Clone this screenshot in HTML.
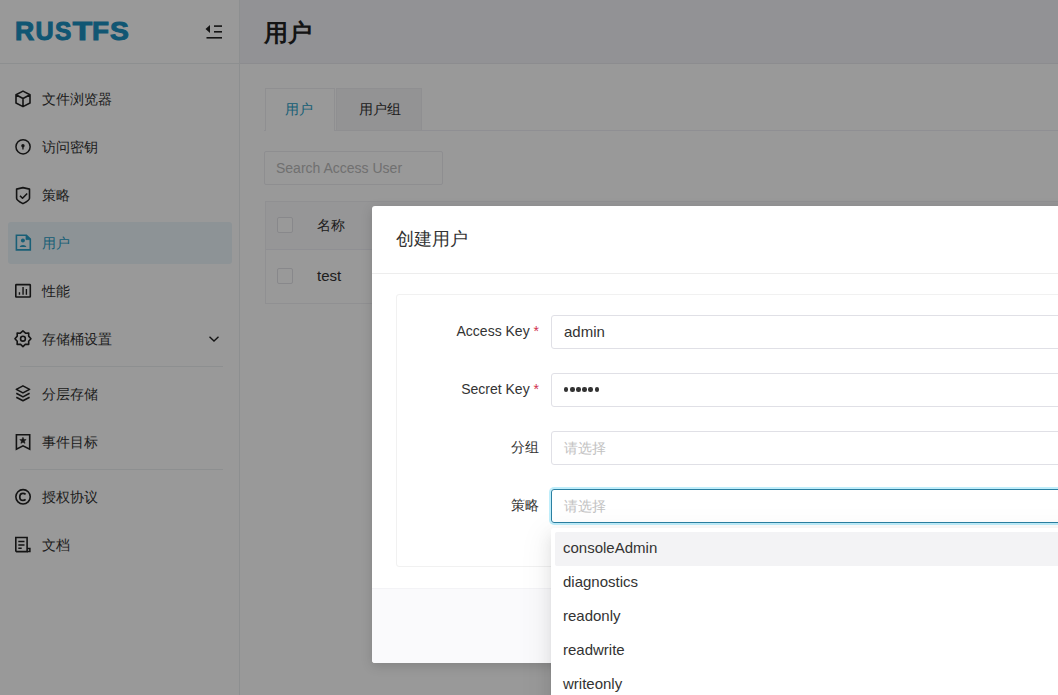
<!DOCTYPE html>
<html><head><meta charset="utf-8">
<style>
*{box-sizing:border-box;margin:0;padding:0}
html,body{width:1058px;height:695px;overflow:hidden;background:#fff;font-family:"Liberation Sans",sans-serif;color:#333;}
.abs{position:absolute}
#side{position:absolute;left:0;top:0;width:240px;height:695px;background:#fff;border-right:1px solid #eceef1}
#side .hd{position:absolute;left:0;top:0;width:239px;height:64px;border-bottom:1px solid #eceef1}
.logo{position:absolute;left:16px;top:18px;font-weight:bold;font-size:25px;line-height:28px;color:#2a9ec6;transform:scaleX(1.14);transform-origin:0 0}
.mi{position:absolute;left:8px;width:224px;height:42px;font-size:14px;color:#333}
.mi.act{background:#ecf6fb;color:#2a9ec6;border-radius:3px}
.mi svg{position:absolute;left:7px;top:12px;overflow:visible}
.mi span{position:absolute;left:34px;top:12px;line-height:18px}
.div{position:absolute;left:20px;width:203px;height:1px;background:#eceef1}
#top{position:absolute;left:240px;top:0;width:818px;height:64px;background:#f3f3f8;border-bottom:1px solid #e9eaee}
#top .t{position:absolute;left:24px;top:19px;font-size:24px;font-weight:bold;color:#222;line-height:28px}
.tab{position:absolute;top:88px;height:43px;font-size:14px;line-height:18px}
.tab span{position:absolute;top:11px}
.search{position:absolute;left:264px;top:151px;width:179px;height:34px;border:1px solid #ededf1;border-radius:2px;font-size:14px;color:#bbb;padding-left:11px;line-height:32px}
.tbl{position:absolute;left:265px;top:201px;width:800px;height:103px;border:1px solid #f0f0f3}
#mask{position:absolute;left:0;top:0;width:1058px;height:695px;background:rgba(0,0,0,0.4)}
#modal{position:absolute;left:372px;top:206px;width:720px;height:457px;background:#fff;border-radius:3px;box-shadow:0 3px 12px rgba(0,0,0,0.15)}
#modal .mt{position:absolute;left:24px;top:22px;font-size:18px;line-height:22px;color:#333}
#modal .hl{position:absolute;left:0;top:67px;width:100%;height:1px;background:#ededed}
.card{position:absolute;left:24px;top:88px;width:700px;height:273px;border:1px solid #f1f1f1;border-radius:3px}
.foot{position:absolute;left:0;top:382px;width:100%;height:75px;background:#fafafc;border-top:1px solid #f3f3f6;border-radius:0 0 3px 3px}
.lbl{position:absolute;font-size:14px;color:#333;line-height:18px;text-align:right}
.req{color:#d03050}
.inp{position:absolute;left:154px;width:600px;height:34px;border:1px solid #e0e0e6;border-radius:3px;font-size:15px;color:#333;padding-left:12px;line-height:32px}
.inp.ph{color:#c2c2c2;font-size:14px}
.inp.foc{border-color:#2b80a2;box-shadow:0 0 0 2px rgba(24,195,240,0.28)}
#dd{position:absolute;left:551px;top:528px;width:600px;height:200px;background:#fff;border-radius:3px;box-shadow:0 3px 6px -4px rgba(0,0,0,.12),0 6px 16px 0 rgba(0,0,0,.08),0 9px 28px 8px rgba(0,0,0,.05)}
.opt{position:absolute;left:4px;width:590px;height:34px;font-size:15px;color:#333;line-height:32px;padding-left:8px}
.dots{position:absolute;left:12px;top:13px;height:5px}.dots i{float:left;width:4.4px;height:4.4px;border-radius:50%;background:#333;margin:0.3px 1.72px 0 0}
.opt.hov{background:#f3f3f5;border-radius:2px}
</style></head><body>
<div id="side">
  <div class="hd"></div>
  <svg class="abs" style="left:0;top:0" width="140" height="60"><g font-family="Liberation Sans" font-weight="bold" font-size="25" fill="#1b90c0" stroke="#1b90c0" stroke-width="1">
<text transform="translate(14.94,0) scale(1.064,1)" x="0" y="40.5">R</text>
<text transform="translate(35.4,0) scale(1.006,1)" x="0" y="40.5">U</text>
<text transform="translate(55.1,0) scale(0.98,1)" x="0" y="40.5">S</text>
<text transform="translate(72.8,0) scale(1.27,1)" x="0" y="40.5">T</text>
<text transform="translate(91.9,0) scale(1.11,1)" x="0" y="40.5">F</text>
<text transform="translate(110,0) scale(1.13,1)" x="0" y="40.5">S</text></g></svg>
  <svg class="abs" style="left:204px;top:24px" width="20" height="16" viewBox="0 0 20 16"><path d="M6 1 L1.5 5 L6 9 Z" fill="#222"/><rect x="10" y="1.3" width="8" height="1.6" fill="#222"/><rect x="10" y="7" width="8" height="1.6" fill="#222"/><rect x="2.5" y="13" width="15.5" height="1.6" fill="#222"/></svg>

  <div class="mi" style="top:78px"><svg width="18" height="18" viewBox="0 0 18 18" fill="none" stroke="#222" stroke-width="1.6" stroke-linejoin="round"><path d="M8 1.1 L15 4.8 V13 L8 16.6 L1 13 V4.8 Z M1 4.8 L8 8.5 L15 4.8 M8 8.5 V16.6"/></svg><span>文件浏览器</span></div>
  <div class="mi" style="top:126px"><svg width="18" height="18" viewBox="0 0 18 18" fill="none" stroke="#222" stroke-width="1.5"><circle cx="8.05" cy="8.8" r="7.1"/><circle cx="7.95" cy="7.7" r="1.7" fill="#222" stroke="none"/><path d="M7.95 8 V11.6" stroke-width="1.3"/></svg><span>访问密钥</span></div>
  <div class="mi" style="top:174px"><svg width="18" height="18" viewBox="0 0 18 18" fill="none" stroke="#222" stroke-width="1.6" stroke-linejoin="round"><path d="M7.95 1.6 L14.5 3.1 V12.2 C14.5 13.8 11.5 15.8 7.95 17.6 C4.4 15.8 1.6 13.8 1.6 12.2 V3.1 Z"/><path d="M5 9.7 L7.5 12.2 L12.2 7.5"/></svg><span>策略</span></div>
  <div class="mi act" style="top:222px"><svg width="18" height="18" viewBox="0 0 18 18" fill="none" stroke="#2a9ec6" stroke-width="1.6" stroke-linejoin="miter"><path d="M1.4 1.3 H11.4 L15.3 5.2 V15.9 H1.4 Z"/><path d="M11 1.3 L15.8 5.6 L11 5.6 Z" fill="#2a9ec6" stroke-width="0.8"/><circle cx="7.9" cy="6.5" r="2" fill="#2a9ec6" stroke="none"/><path d="M4.7 13 C5 10.2 10.9 10.2 11.4 13 Z" fill="#2a9ec6" stroke="none"/></svg><span>用户</span></div>
  <div class="mi" style="top:270px"><svg width="18" height="18" viewBox="0 0 18 18" fill="none" stroke="#222" stroke-width="1.6"><rect x="0.8" y="2.6" width="14.5" height="12.4" rx="0.6"/><path d="M4.45 12.8 V10.2 M8.05 12.8 V5 M11.4 12.8 V7" stroke-width="1.4"/></svg><span>性能</span></div>
  <div class="mi" style="top:318px"><svg width="18" height="18" viewBox="0 0 18 18" fill="none" stroke="#222" stroke-width="1.6" stroke-linejoin="round"><path d="M7.95 0.9 L10.55 3.2 L13.75 3 L13.65 6.1 L15.95 8.7 L13.65 11.3 L13.75 14.4 L10.55 14.2 L7.95 16.6 L5.35 14.2 L2.15 14.4 L2.25 11.3 L-0.05 8.7 L2.25 6.1 L2.15 3 L5.35 3.2 Z"/><circle cx="7.95" cy="8.7" r="2.4"/></svg><span>存储桶设置</span><svg style="left:201px;top:18px" width="10" height="6" viewBox="0 0 10 6" fill="none" stroke="#222" stroke-width="1.4"><path d="M0.5 0.8 L5 5 L9.5 0.8"/></svg></div>
  <div class="div" style="top:366px"></div>
  <div class="mi" style="top:373px"><svg width="18" height="18" viewBox="0 0 18 18" fill="none" stroke="#222" stroke-width="1.6" stroke-linejoin="round"><path d="M7.95 0.9 L14.6 4.4 L7.95 7.9 L1.3 4.4 Z"/><path d="M1.3 8.3 L7.95 11.9 L14.6 8.3"/><path d="M1.3 12.2 L7.95 15.7 L14.6 12.2"/></svg><span>分层存储</span></div>
  <div class="mi" style="top:421px"><svg width="18" height="18" viewBox="0 0 18 18" fill="none" stroke="#222" stroke-width="1.6" stroke-linejoin="miter"><path d="M1.4 1.7 H14.7 V16.3 L8 12.9 L1.4 16.3 Z"/><path d="M7.95 4.2 L8.95 6.4 L11.2 6.6 L9.5 8.1 L10 10.4 L7.95 9.2 L5.9 10.4 L6.4 8.1 L4.7 6.6 L6.95 6.4 Z" fill="#222" stroke-width="0.5"/></svg><span>事件目标</span></div>
  <div class="div" style="top:469px"></div>
  <div class="mi" style="top:476px"><svg width="18" height="18" viewBox="0 0 18 18" fill="none" stroke="#222" stroke-width="1.6"><circle cx="8.05" cy="8.8" r="7.2"/><path d="M10.6 6.3 C9.8 5.5 9 5.3 8 5.3 C6 5.3 4.8 6.8 4.8 8.9 C4.8 11 6 12.4 8 12.4 C9 12.4 9.8 12.2 10.6 11.4" stroke-width="1.7"/></svg><span>授权协议</span></div>
  <div class="mi" style="top:524px"><svg width="18" height="18" viewBox="0 0 18 18" fill="none" stroke="#222" stroke-width="1.6"><path d="M0.8 1.5 H12.1 V15.6 H1.6 L0.8 14.8 Z"/><path d="M12.1 12.5 H14.9 V15.6 H12.1" stroke-width="1.5"/><path d="M3.3 5.4 H9.5 M3.3 8.9 H9.5 M3.3 12.3 H6.7" stroke-width="1.5"/></svg><span>文档</span></div>
</div>

<div id="top"><div class="t">用户</div></div>
<div class="abs" style="left:264px;top:130px;width:794px;height:1px;background:#efeff5"></div>
<div class="tab" style="left:265px;width:70px;background:#fff;border:1px solid #efeff2;border-bottom:none"><span style="left:19px;color:#2a9ec6">用户</span></div>
<div class="tab" style="left:336px;width:86px;background:#f5f5f7;border:1px solid #efeff2"><span style="left:22px;color:#333">用户组</span></div>
<div class="search">Search Access User</div>
<div class="tbl">
  <div class="abs" style="left:0;top:0;width:100%;height:48px;background:#fbfbfc;border-bottom:1px solid #efeff5"></div>
  <div class="abs" style="left:11px;top:15px;width:16px;height:16px;border:1px solid #e3e3e8;border-radius:2px;background:#fff"></div>
  <div class="abs" style="left:51px;top:14px;font-size:14px;line-height:18px;color:#333">名称</div>
  <div class="abs" style="left:11px;top:66px;width:16px;height:16px;border:1px solid #e3e3e8;border-radius:2px;background:#fff"></div>
  <div class="abs" style="left:51px;top:65px;font-size:15px;line-height:18px;color:#333">test</div>
</div>

<div id="mask"></div>

<div id="modal">
  <div class="mt">创建用户</div>
  <div class="hl"></div>
  <div class="card">
    <div class="lbl" style="left:22px;top:27px;width:120px">Access Key <span class="req">*</span></div>
    <div class="inp" style="top:20px">admin</div>
    <div class="lbl" style="left:22px;top:85px;width:120px">Secret Key <span class="req">*</span></div>
    <div class="inp" style="top:78px"><span class="dots"><i></i><i></i><i></i><i></i><i></i><i></i></span></div>
    <div class="lbl" style="left:57px;top:143px;width:85px">分组</div>
    <div class="inp ph" style="top:136px">请选择</div>
    <div class="lbl" style="left:57px;top:201px;width:85px">策略</div>
    <div class="inp ph foc" style="top:194px">请选择</div>
  </div>
  <div class="foot"></div>
</div>

<div id="dd">
  <div class="opt hov" style="top:4px">consoleAdmin</div>
  <div class="opt" style="top:38px">diagnostics</div>
  <div class="opt" style="top:72px">readonly</div>
  <div class="opt" style="top:106px">readwrite</div>
  <div class="opt" style="top:140px">writeonly</div>
</div>
</body></html>
